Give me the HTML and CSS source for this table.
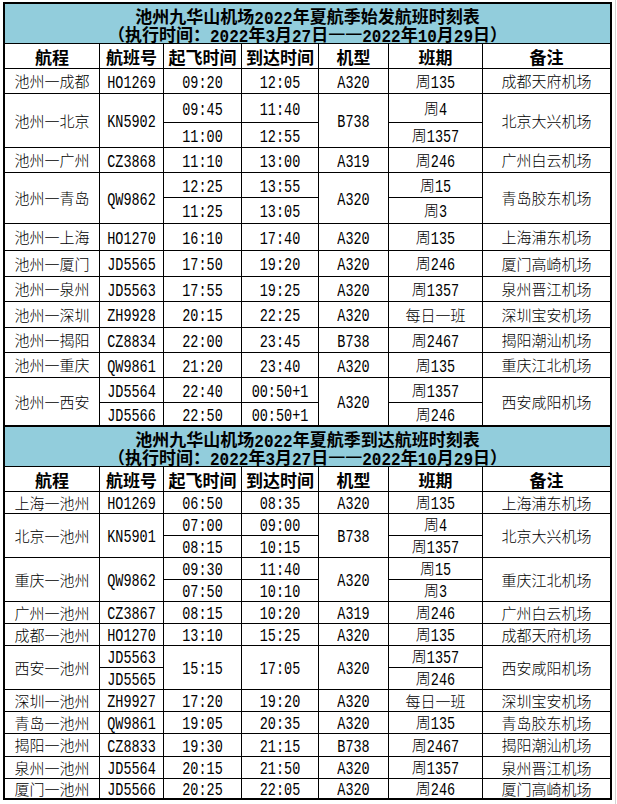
FILE: index.html
```html
<!DOCTYPE html>
<html lang="zh-CN">
<head>
<meta charset="utf-8">
<title>池州九华山机场2022年夏航季航班时刻表</title>
<link rel="stylesheet" href="styles.css">
</head>
<body>
<div class="sheet">
<table class="tt">
<colgroup>
<col class="c1"><col class="c2"><col class="c3"><col class="c4"><col class="c5"><col class="c6"><col class="c7">
</colgroup>
<tbody>
<tr class="h40"><td colspan="7" class="title">池州九华山机场<span class="d">2022</span>年夏航季始发航班时刻表<br>（执行时间：<span class="d">2022</span>年<span class="d">3</span>月<span class="d">27</span>日<span class="dash">一一</span><span class="d">2022</span>年<span class="d">10</span>月<span class="d">29</span>日）</td></tr>
<tr class="h25 head"><td>航程</td><td>航班号</td><td>起飞时间</td><td>到达时间</td><td>机型</td><td>班期</td><td class="note">备注</td></tr>
<tr class="h25"><td>池州一成都</td><td><span class="d">HO1269</span></td><td><span class="d">09:20</span></td><td><span class="d">12:05</span></td><td><span class="d">A320</span></td><td>周<span class="d">135</span></td><td class="note">成都天府机场</td></tr>
<tr class="h29"><td rowspan="2">池州一北京</td><td rowspan="2"><span class="d">KN5902</span></td><td><span class="d">09:45</span></td><td><span class="d">11:40</span></td><td rowspan="2"><span class="d">B738</span></td><td>周<span class="d">4</span></td><td rowspan="2" class="note">北京大兴机场</td></tr>
<tr class="h25"><td><span class="d">11:00</span></td><td><span class="d">12:55</span></td><td>周<span class="d">1357</span></td></tr>
<tr class="h25"><td>池州一广州</td><td><span class="d">CZ3868</span></td><td><span class="d">11:10</span></td><td><span class="d">13:00</span></td><td><span class="d">A319</span></td><td>周<span class="d">246</span></td><td class="note">广州白云机场</td></tr>
<tr class="h25"><td rowspan="2">池州一青岛</td><td rowspan="2"><span class="d">QW9862</span></td><td><span class="d">12:25</span></td><td><span class="d">13:55</span></td><td rowspan="2"><span class="d">A320</span></td><td>周<span class="d">15</span></td><td rowspan="2" class="note">青岛胶东机场</td></tr>
<tr class="h26"><td><span class="d">11:25</span></td><td><span class="d">13:05</span></td><td>周<span class="d">3</span></td></tr>
<tr class="h27"><td>池州一上海</td><td><span class="d">HO1270</span></td><td><span class="d">16:10</span></td><td><span class="d">17:40</span></td><td><span class="d">A320</span></td><td>周<span class="d">135</span></td><td class="note">上海浦东机场</td></tr>
<tr class="h26"><td>池州一厦门</td><td><span class="d">JD5565</span></td><td><span class="d">17:50</span></td><td><span class="d">19:20</span></td><td><span class="d">A320</span></td><td>周<span class="d">246</span></td><td class="note">厦门高崎机场</td></tr>
<tr class="h25"><td>池州一泉州</td><td><span class="d">JD5563</span></td><td><span class="d">17:55</span></td><td><span class="d">19:25</span></td><td><span class="d">A320</span></td><td>周<span class="d">1357</span></td><td class="note">泉州晋江机场</td></tr>
<tr class="h26"><td>池州一深圳</td><td><span class="d">ZH9928</span></td><td><span class="d">20:15</span></td><td><span class="d">22:25</span></td><td><span class="d">A320</span></td><td>每日一班</td><td class="note">深圳宝安机场</td></tr>
<tr class="h25"><td>池州一揭阳</td><td><span class="d">CZ8834</span></td><td><span class="d">22:00</span></td><td><span class="d">23:45</span></td><td><span class="d">B738</span></td><td>周<span class="d">2467</span></td><td class="note">揭阳潮汕机场</td></tr>
<tr class="h25"><td>池州一重庆</td><td><span class="d">QW9861</span></td><td><span class="d">21:20</span></td><td><span class="d">23:40</span></td><td><span class="d">A320</span></td><td>周<span class="d">135</span></td><td class="note">重庆江北机场</td></tr>
<tr class="h25"><td rowspan="2">池州一西安</td><td><span class="d">JD5564</span></td><td><span class="d">22:40</span></td><td><span class="d">00:50+1</span></td><td rowspan="2"><span class="d">A320</span></td><td>周<span class="d">1357</span></td><td rowspan="2" class="note">西安咸阳机场</td></tr>
<tr class="h23"><td><span class="d">JD5566</span></td><td><span class="d">22:50</span></td><td><span class="d">00:50+1</span></td><td>周<span class="d">246</span></td></tr>
</tbody>
<tbody>
<tr class="h41"><td colspan="7" class="title t2">池州九华山机场<span class="d">2022</span>年夏航季到达航班时刻表<br>（执行时间：<span class="d">2022</span>年<span class="d">3</span>月<span class="d">27</span>日<span class="dash">一一</span><span class="d">2022</span>年<span class="d">10</span>月<span class="d">29</span>日）</td></tr>
<tr class="h25 head"><td>航程</td><td>航班号</td><td>起飞时间</td><td>到达时间</td><td>机型</td><td>班期</td><td class="note">备注</td></tr>
<tr class="h22"><td>上海一池州</td><td><span class="d">HO1269</span></td><td><span class="d">06:50</span></td><td><span class="d">08:35</span></td><td><span class="d">A320</span></td><td>周<span class="d">135</span></td><td class="note">上海浦东机场</td></tr>
<tr class="h22"><td rowspan="2">北京一池州</td><td rowspan="2"><span class="d">KN5901</span></td><td><span class="d">07:00</span></td><td><span class="d">09:00</span></td><td rowspan="2"><span class="d">B738</span></td><td>周<span class="d">4</span></td><td rowspan="2" class="note">北京大兴机场</td></tr>
<tr class="h22"><td><span class="d">08:15</span></td><td><span class="d">10:15</span></td><td>周<span class="d">1357</span></td></tr>
<tr class="h22"><td rowspan="2">重庆一池州</td><td rowspan="2"><span class="d">QW9862</span></td><td><span class="d">09:30</span></td><td><span class="d">11:40</span></td><td rowspan="2"><span class="d">A320</span></td><td>周<span class="d">15</span></td><td rowspan="2" class="note">重庆江北机场</td></tr>
<tr class="h22"><td><span class="d">07:50</span></td><td><span class="d">10:10</span></td><td>周<span class="d">3</span></td></tr>
<tr class="h22"><td>广州一池州</td><td><span class="d">CZ3867</span></td><td><span class="d">08:15</span></td><td><span class="d">10:20</span></td><td><span class="d">A319</span></td><td>周<span class="d">246</span></td><td class="note">广州白云机场</td></tr>
<tr class="h22"><td>成都一池州</td><td><span class="d">HO1270</span></td><td><span class="d">13:10</span></td><td><span class="d">15:25</span></td><td><span class="d">A320</span></td><td>周<span class="d">135</span></td><td class="note">成都天府机场</td></tr>
<tr class="h22"><td rowspan="2">西安一池州</td><td><span class="d">JD5563</span></td><td rowspan="2"><span class="d">15:15</span></td><td rowspan="2"><span class="d">17:05</span></td><td rowspan="2"><span class="d">A320</span></td><td>周<span class="d">1357</span></td><td rowspan="2" class="note">西安咸阳机场</td></tr>
<tr class="h22"><td><span class="d">JD5565</span></td><td>周<span class="d">246</span></td></tr>
<tr class="h22"><td>深圳一池州</td><td><span class="d">ZH9927</span></td><td><span class="d">17:20</span></td><td><span class="d">19:20</span></td><td><span class="d">A320</span></td><td>每日一班</td><td class="note">深圳宝安机场</td></tr>
<tr class="h22"><td>青岛一池州</td><td><span class="d">QW9861</span></td><td><span class="d">19:05</span></td><td><span class="d">20:35</span></td><td><span class="d">A320</span></td><td>周<span class="d">135</span></td><td class="note">青岛胶东机场</td></tr>
<tr class="h23"><td>揭阳一池州</td><td><span class="d">CZ8833</span></td><td><span class="d">19:30</span></td><td><span class="d">21:15</span></td><td><span class="d">B738</span></td><td>周<span class="d">2467</span></td><td class="note">揭阳潮汕机场</td></tr>
<tr class="h22"><td>泉州一池州</td><td><span class="d">JD5564</span></td><td><span class="d">20:15</span></td><td><span class="d">21:50</span></td><td><span class="d">A320</span></td><td>周<span class="d">1357</span></td><td class="note">泉州晋江机场</td></tr>
<tr class="h19 lastrow"><td>厦门一池州</td><td><span class="d">JD5566</span></td><td><span class="d">20:25</span></td><td><span class="d">22:05</span></td><td><span class="d">A320</span></td><td>周<span class="d">246</span></td><td class="note">厦门高崎机场</td></tr>
</tbody>
</table>
</div>
</body>
</html>
```
FILE: styles.css
```css
html, body {
  margin: 0;
  padding: 0;
  background: #ffffff;
}

.sheet {
  box-sizing: border-box;
  width: 616px;
  height: 804px;
  padding: 2px 0 0 3px;
  border-right: 1px solid #d4d4d4;
}

.tt {
  border: 2px solid #000000;
  border-collapse: separate;
  border-spacing: 0;
  table-layout: fixed;
  width: 609px;
  font-family: "Noto Sans CJK SC", "Noto Sans", sans-serif;
  font-size: 15px;
  font-weight: 300;
  line-height: 16px;
  color: #000000;
}

.c1 { width: 95px; }
.c2 { width: 64px; }
.c3 { width: 78px; }
.c4 { width: 77px; }
.c5 { width: 70px; }
.c6 { width: 94px; }
.c7 { width: 127px; }

.tt td {
  box-sizing: border-box;
  padding: 0;
  border-right: 1px solid #000000;
  border-bottom: 1px solid #000000;
  text-align: center;
  vertical-align: middle;
  white-space: nowrap;
}

.tt td.note { border-right: 0; }
.tt tr.lastrow td { border-bottom: 0; }

.d {
  display: inline-block;
  font-family: "Liberation Mono", "DejaVu Sans Mono", monospace;
  font-size: 13.5px;
  font-weight: 400;
  line-height: 12px;
  transform: scaleY(1.3);
}

.tt td.title {
  border-right: 0;
  background: #92cddc;
  font-size: 17px;
  font-weight: 700;
  line-height: 18px;
  padding-top: 2px;
}

.tt td.t2 { border-top: 1px solid #000000; }

.title .d {
  font-size: 16px;
  font-weight: 700;
  transform: scaleY(1.2);
}

.dash {
  font-size: 17px;
  font-weight: 400;
}

.head td {
  font-size: 17px;
  font-weight: 700;
  line-height: 18px;
  padding-top: 2px;
}

.h19 { height: 19px; }
.h22 { height: 22px; }
.h23 { height: 23px; }
.h25 { height: 25px; }
.h26 { height: 26px; }
.h27 { height: 27px; }
.h29 { height: 29px; }
.h40 { height: 40px; }
.h41 { height: 41px; }
```
